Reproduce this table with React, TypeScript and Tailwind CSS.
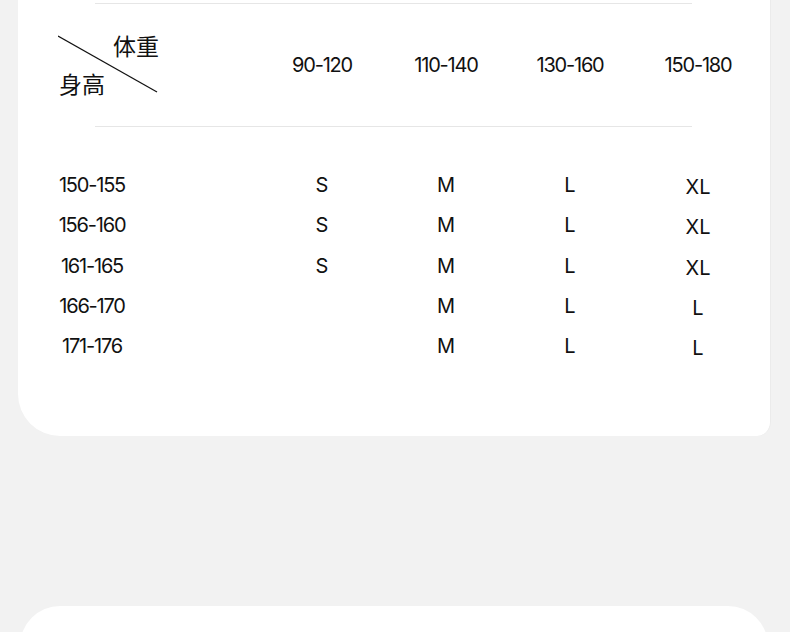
import React from 'react';

const rows = [
  { h: '150-155', s: ['S', 'M', 'L', 'XL'] },
  { h: '156-160', s: ['S', 'M', 'L', 'XL'] },
  { h: '161-165', s: ['S', 'M', 'L', 'XL'] },
  { h: '166-170', s: ['', 'M', 'L', 'L'] },
  { h: '171-176', s: ['', 'M', 'L', 'L'] },
];

const weights = ['90-120', '110-140', '130-160', '150-180'];
const cellW = ['w-[124px]', 'w-[124px]', 'w-[124px]', 'w-[132px]'];

const num = { fontFamily: 'Inter, "Noto Sans", sans-serif' };
const cjk = { fontFamily: '"Noto Sans CJK SC", sans-serif' };

export default function App() {
  return (
    <div className="w-[790px] h-[632px] overflow-hidden bg-[#f2f2f2]">
      <div className="ml-[18px] w-[753px] h-[436px] bg-white rounded-bl-[42px] rounded-br-[14px] border-r border-[#ebebeb]">
        <div className="pt-[3px]">
          <div className="ml-[77px] w-[597px] h-px bg-[#e6e6e6]" />
          {/* header */}
          <div className="flex items-center h-[122px] text-[#111]">
            <div className="ml-[40px] w-[102px] h-[64px] relative whitespace-nowrap" style={cjk}>
              <svg className="absolute left-0 top-0" width="102" height="64" viewBox="0 0 102 64">
                <line x1="0" y1="3" x2="99" y2="59" stroke="#111" strokeWidth="1.2" />
              </svg>
              <span className="absolute left-[55px] top-[1px] text-[23px] leading-none">体重</span>
              <span className="absolute left-[1px] top-[39px] text-[23px] leading-none">身高</span>
            </div>
            <div className="w-[100px]" />
            {weights.map((w, i) => (
              <div key={w} className={`${cellW[i]} text-center text-[20px] tracking-[-1.2px]`} style={num}>
                {w}
              </div>
            ))}
          </div>
          <div className="ml-[77px] w-[597px] h-px bg-[#e6e6e6]" />
          {/* rows */}
          <div className="pt-[38px] text-[#111]">
            {rows.map((r) => (
              <div key={r.h} className="flex items-center h-[40.3px]">
                <div className="ml-[24px] w-[100px] text-center text-[20px] tracking-[-1.2px]" style={num}>
                  {r.h}
                </div>
                <div className="w-[118px]" />
                {r.s.map((v, i) => (
                  <div
                    key={i}
                    className={`${cellW[i]} text-center text-[20px] ${i === 3 ? 'pt-[4px]' : ''}`}
                    style={num}
                  >
                    {v}
                  </div>
                ))}
              </div>
            ))}
          </div>
        </div>
      </div>
      <div className="mt-[170px] ml-[20px] w-[748px] h-[60px] bg-white rounded-t-[40px]" />
    </div>
  );
}
